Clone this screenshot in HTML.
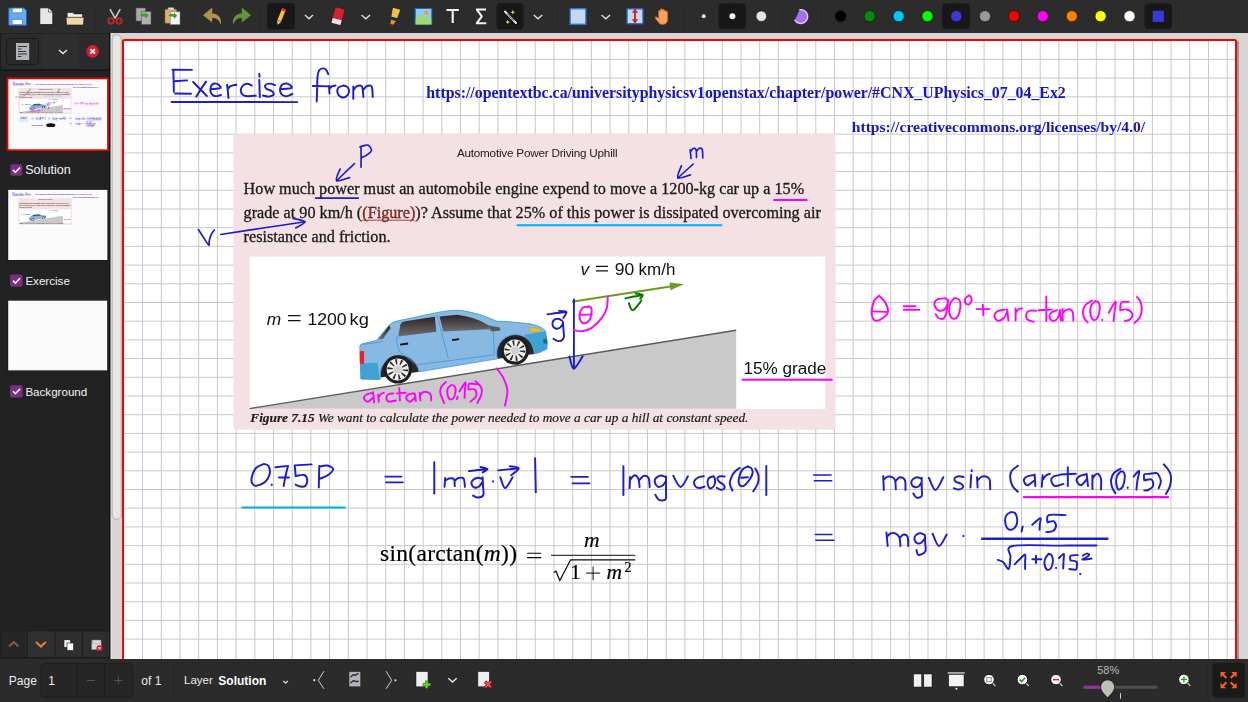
<!DOCTYPE html>
<html><head><meta charset="utf-8">
<style>
html,body{margin:0;padding:0}
body{width:1248px;height:702px;overflow:hidden;position:relative;background:#2b2b2b;font-family:"Liberation Sans",sans-serif}
.t{position:absolute;white-space:nowrap;line-height:1}
</style></head><body>
<div style="position:absolute;left:0;top:0;width:1248px;height:33px;background:#2c2c2c"></div>
<svg width="1248" height="33" viewBox="0 0 1248 33" style="position:absolute;left:0;top:0">
<g stroke="#272727" stroke-width="1"><path d="M95.5 3V30M193.5 3V30M260.5 3V30M557.5 3V30M683.5 3V30M782.5 3V30M821.5 3V30M1178.5 3V30"/></g>
<g fill="#181818"><rect x="267" y="3" width="28" height="26.5" rx="4"/><rect x="496.5" y="3" width="27" height="26.5" rx="4"/><rect x="718.5" y="3.4" width="27.5" height="25.5" rx="4"/><rect x="942" y="3.4" width="28" height="25.5" rx="4"/><rect x="1144.5" y="3.4" width="27.5" height="25.5" rx="4"/></g>
<!-- save -->
<path d="M9.5 8h14.5l2.5 2.5v14a.8 .8 0 0 1-.8 .8h-16.2a.8 .8 0 0 1-.8-.8v-15.7a.8 .8 0 0 1 .8-.8z" fill="#64aaf6" stroke="#1f5fc6" stroke-width="1"/>
<path d="M12.2 8.2h10.2v3.6a1 1 0 0 1-1 1h-8.2a1 1 0 0 1-1-1z" fill="#fff" stroke="#2a66c8" stroke-width=".6"/>
<path d="M12.2 24.6v-4.2a1 1 0 0 1 1-1h8.2a1 1 0 0 1 1 1v4.2z" fill="#fff" stroke="#2a66c8" stroke-width=".6"/>
<!-- new -->
<path d="M39.8 7.8h8.8l4.2 4.2v12.6h-13z" fill="#e6e6e6" stroke="#151515" stroke-width=".8"/>
<path d="M48.6 7.8v4.2h4.2z" fill="#fafafa" stroke="#151515" stroke-width=".6"/>
<!-- open -->
<path d="M67.2 12.6h5.8l1.2 1.3h8.3v3.6h-15.3z" fill="#f2f2f2" stroke="#151515" stroke-width=".6"/>
<path d="M66 17.3h18l-.6 7.7h-16.8z" fill="#f1d7a6" stroke="#151515" stroke-width=".6"/>
<!-- cut -->
<path d="M110 9.2l5.2 9.2M120.2 9.2l-5.2 9.2" stroke="#c8c8c8" stroke-width="1.6" fill="none"/>
<circle cx="111" cy="21" r="2.7" fill="none" stroke="#b8282b" stroke-width="2"/>
<circle cx="119" cy="21" r="2.7" fill="none" stroke="#b8282b" stroke-width="2"/>
<!-- copy -->
<rect x="136" y="8" width="9.5" height="13" fill="#a8a8a8" stroke="#555" stroke-width=".6"/>
<rect x="141.5" y="11.5" width="9.5" height="13" fill="#b0b0b0" stroke="#555" stroke-width=".6"/>
<path d="M140 15.5c1-2 3.5-2.5 5.5-1.5v-1.8l3.2 3.2-3.2 3.2v-1.8c-2-.8-4-.3-5.5-1.3z" fill="#3aa02a"/>
<!-- paste -->
<rect x="165" y="9.2" width="11.5" height="14" rx="1" fill="#e0b070" stroke="#8a6a3a" stroke-width=".6"/>
<rect x="168" y="7.4" width="6" height="2.8" rx=".8" fill="#ddd" stroke="#777" stroke-width=".5"/>
<rect x="170.2" y="11.8" width="9.8" height="12.8" fill="#f4f4f4" stroke="#777" stroke-width=".6"/>
<path d="M168.5 15.8c1-2 3.5-2.5 5.5-1.5v-1.8l3.2 3.2-3.2 3.2v-1.8c-2-.8-4-.3-5.5-1.3z" fill="#3aa02a"/>
<!-- undo -->
<path d="M212.2 7.5L203 15.2l9.2 7.3v-4.4c4 0 7 1.5 8.4 6.8 1.6-6.5-1.5-11-8.4-11.5z" fill="#b0914f"/>
<!-- redo -->
<path d="M241.8 7.5L251 15.2l-9.2 7.3v-4.4c-4 0-7 1.5-8.4 6.8-1.6-6.5 1.5-11 8.4-11.5z" fill="#5c9838"/>
<!-- pencil -->
<g transform="translate(281,16.5) rotate(22)"><rect x="-2.3" y="-7.5" width="4.6" height="12.5" fill="#f6c23a" stroke="#000" stroke-width=".5"/><rect x="-2.3" y="-8.5" width="4.6" height="2.5" fill="#e02838"/><path d="M-2.3 5l2.3 4 2.3-4z" fill="#d8c8b0"/></g>
<!-- chevrons -->
<g fill="none" stroke="#e0e0e0" stroke-width="1.4"><path d="M305 15l4 3.8 4-3.8M361.6 15l4.2 3.8 4.2-3.8M533.8 15l4.2 3.8 4.2-3.8M601.6 15l4.2 3.8 4.2-3.8"/></g>
<!-- eraser -->
<g transform="translate(338,16.2) rotate(15)"><rect x="-4.6" y="-8" width="9.2" height="16" rx=".8" fill="#d82030"/><rect x="-4.6" y="3" width="9.2" height="5" fill="#e8e8e8"/></g>
<!-- highlighter -->
<g transform="translate(394.5,16.5) rotate(15)"><path d="M-3.8 -8h7.6l-.8 9h-6z" fill="#f0c040"/><rect x="-3" y="1" width="6" height="3" fill="#1a2a48"/><path d="M-2.5 4h5l-1.5 4.2h-3z" fill="#f09020"/></g>
<!-- image -->
<rect x="415.2" y="8.5" width="16.6" height="16" fill="#8cccf6" stroke="#1f66d2" stroke-width="1"/>
<path d="M415.7 18l4.5-3.5 5 3.8 3-2 3.1 2v6.2h-15.6z" fill="#a2da6a"/>
<circle cx="426.2" cy="12.7" r="2.3" fill="#f5a020"/>
<!-- T -->
<path d="M446.5 10h12.4M452.7 10v13" stroke="#f4f4f4" stroke-width="2.2" fill="none"/>
<!-- sigma -->
<path d="M486 9.6h-9.2l5 6.8-5 6.8h9.5" stroke="#f4f4f4" stroke-width="2" fill="none" stroke-linejoin="round"/>
<!-- wand -->
<path d="M505 11.5l11 11.5" stroke="#000" stroke-width="3.2" stroke-linecap="round"/>
<path d="M505 11.5l11 11.5" stroke="#f0f0f0" stroke-width="2" stroke-linecap="round"/>
<path d="M507 13.5l7 7.2" stroke="#24344e" stroke-width="1"/>
<path d="M512.8 10l.7 1.5 1.5.7-1.5.7-.7 1.5-.7-1.5-1.5-.7 1.5-.7z" fill="#f4cc40"/>
<path d="M507.7 19.8l.7 1.5 1.5.7-1.5.7-.7 1.5-.7-1.5-1.5-.7 1.5-.7z" fill="#f4cc40"/>
<!-- square -->
<rect x="570.2" y="8.8" width="15.6" height="15.4" fill="#c6d8ee" stroke="#2f7ee8" stroke-width="1.3"/>
<!-- vspace -->
<rect x="627" y="8.8" width="16" height="15" fill="#c6d8ee" stroke="#1f5ed0" stroke-width="1.3"/>
<path d="M635 8.5l-3.2 4.2h2.2v6.6h-2.2l3.2 4.5 3.2-4.5h-2.2v-6.6h2.2z" fill="#d62024"/>
<!-- hand -->
<path d="M658 21.5c-2-2-3.5-3.5-2.6-4.4.8-.8 2 .3 3.2 1.4v-7.3c0-1.2 1.8-1.2 1.8 0v-1.6c0-1.2 1.8-1.2 1.8 0v.4c0-1.2 1.8-1.2 1.8 0v1c0-1.2 1.8-1.2 1.8 0v1c0-1.2 1.8-1.2 1.8 0v7.5c0 3-2 5-5.2 5-2.3 0-3.5-1-4.4-3z" fill="#f8a060" stroke="#d05a10" stroke-width=".7"/>
<!-- dots -->
<circle cx="703.7" cy="16.2" r="1.9" fill="#f4f4f4"/>
<circle cx="732.4" cy="16.2" r="3" fill="#f4f4f4"/>
<circle cx="761.3" cy="16.2" r="5.3" fill="#e4e4e4" stroke="#111" stroke-width=".6"/>
<!-- purple -->
<path d="M799.8 9.6A7 7 0 1 1 794.8 20.2Z" fill="#a474e4"/>
<path d="M799.8 9.6A7 7 0 1 1 794.8 20.2" fill="none" stroke="#e8c8ff" stroke-width="1.3" stroke-linecap="round"/>
<g stroke="#151515" stroke-width=".7">
<circle cx="840.6" cy="16.2" r="5.6" fill="#000"/>
<circle cx="869.7" cy="16.2" r="5.6" fill="#0a8a0a"/>
<circle cx="898.6" cy="16.2" r="5.6" fill="#00c8ff"/>
<circle cx="927.4" cy="16.2" r="5.6" fill="#00ff00"/>
<circle cx="956.3" cy="16.2" r="5.6" fill="#3a3ad8"/>
<circle cx="985" cy="16.2" r="5.6" fill="#999"/>
<circle cx="1014" cy="16.2" r="5.6" fill="#ff0000"/>
<circle cx="1042.7" cy="16.2" r="5.6" fill="#ff00ff"/>
<circle cx="1071.8" cy="16.2" r="5.6" fill="#ff8000"/>
<circle cx="1100.6" cy="16.2" r="5.6" fill="#ffff00"/>
<circle cx="1129.5" cy="16.2" r="5.6" fill="#ffffff"/>
</g>
<rect x="1152.7" y="10.8" width="11.2" height="11.1" fill="#3a3ad8"/>
</svg>

<div style="position:absolute;left:110px;top:33px;width:1138px;height:626px;background:#d8d6d2"></div>
<svg width="1248" height="702" viewBox="0 0 1248 702" style="position:absolute;left:0;top:0;will-change:transform">
<defs><clipPath id="cv"><rect x="110" y="33" width="1138" height="626"/></clipPath></defs>
<g clip-path="url(#cv)">
<rect x="111" y="33.5" width="11" height="626" fill="#d8d6d2"/>
<path d="M110.9 33V659" stroke="#f4f4f2" stroke-width="1"/>
<rect x="112.2" y="34.6" width="9" height="484.8" rx="4.5" fill="#e7e6e3" stroke="#a4a4a2" stroke-width=".8"/>
<path d="M1238 41V660M124 41.2" stroke="#7f8f8f" stroke-width="1.6" fill="none"/>
<rect x="123" y="40" width="1113" height="800" rx="1.5" fill="#fff" stroke="#ff0000" stroke-width="2"/>
<path d="M142.6 41V659M161.3 41V659M180.0 41V659M198.7 41V659M217.4 41V659M236.1 41V659M254.8 41V659M273.5 41V659M292.2 41V659M310.9 41V659M329.6 41V659M348.3 41V659M367.0 41V659M385.7 41V659M404.4 41V659M423.1 41V659M441.8 41V659M460.5 41V659M479.2 41V659M497.9 41V659M516.6 41V659M535.3 41V659M554.0 41V659M572.7 41V659M591.4 41V659M610.1 41V659M628.8 41V659M647.5 41V659M666.2 41V659M684.9 41V659M703.6 41V659M722.3 41V659M741.0 41V659M759.7 41V659M778.4 41V659M797.1 41V659M815.8 41V659M834.5 41V659M853.2 41V659M871.9 41V659M890.6 41V659M909.3 41V659M928.0 41V659M946.7 41V659M965.4 41V659M984.1 41V659M1002.8 41V659M1021.5 41V659M1040.2 41V659M1058.9 41V659M1077.6 41V659M1096.3 41V659M1115.0 41V659M1133.7 41V659M1152.4 41V659M1171.1 41V659M1189.8 41V659M1208.5 41V659M1227.2 41V659M124 59.4H1235M124 78.1H1235M124 96.8H1235M124 115.5H1235M124 134.2H1235M124 152.9H1235M124 171.6H1235M124 190.3H1235M124 209.0H1235M124 227.7H1235M124 246.4H1235M124 265.1H1235M124 283.8H1235M124 302.5H1235M124 321.2H1235M124 339.9H1235M124 358.6H1235M124 377.3H1235M124 396.0H1235M124 414.7H1235M124 433.4H1235M124 452.1H1235M124 470.8H1235M124 489.5H1235M124 508.2H1235M124 526.9H1235M124 545.6H1235M124 564.3H1235M124 583.0H1235M124 601.7H1235M124 620.4H1235M124 639.1H1235" stroke="#c8c8c8" stroke-width="1" fill="none"/>
<g id="Lex"><path d="M173.4 69.9C173.4 71.6 173.5 76.4 173.6 80.0C173.7 83.6 173.8 89.8 173.8 91.7M172.5 69.7L191.9 69.9M174.3 81.2L187.0 80.4M175.1 93.5L191.0 93.7M206.0 81.6C205.2 82.8 202.6 86.5 201.0 89.0C199.4 91.5 197.1 95.3 196.3 96.6M193.2 82.0C194.3 83.2 197.7 86.7 200.0 89.0C202.3 91.3 205.8 94.9 206.9 96.1M210.8 89.1C212.4 88.9 218.7 88.8 220.1 88.2C221.5 87.6 219.9 86.1 219.2 85.3C218.5 84.5 217.2 83.7 216.0 83.6C214.8 83.5 212.9 83.8 212.0 84.7C211.1 85.6 210.5 87.6 210.4 89.0C210.3 90.4 210.5 92.1 211.2 93.3C211.9 94.5 213.3 95.6 214.5 96.0C215.7 96.4 217.4 96.0 218.5 95.8C219.6 95.6 220.6 95.1 221.0 95.0M227.1 84.7C227.2 85.8 227.6 88.8 227.8 91.0C228.0 93.2 228.4 96.8 228.5 97.9M227.6 89.5C228.1 89.0 229.0 87.0 230.5 86.2C232.0 85.4 235.4 85.0 236.4 84.7M251.8 85.6C251.0 85.3 248.6 83.7 247.0 83.8C245.4 83.9 243.5 84.8 242.5 86.0C241.5 87.2 240.7 89.4 240.8 90.9C240.9 92.4 241.8 94.1 243.0 95.0C244.2 95.9 245.9 96.1 248.0 96.2C250.1 96.3 254.5 95.8 255.8 95.7M259.3 73.7L259.5 76.8M259.3 80.0L259.8 97.0M275.0 85.2C274.2 84.9 271.6 83.6 270.0 83.6C268.4 83.6 265.9 84.4 265.3 85.3C264.7 86.2 265.4 87.8 266.5 88.8C267.6 89.8 270.8 90.2 272.0 91.2C273.2 92.2 274.2 93.7 273.6 94.6C273.0 95.5 270.3 96.4 268.5 96.6C266.7 96.8 263.9 95.7 263.0 95.5M280.6 89.1C282.4 88.9 289.6 88.9 291.2 88.2C292.8 87.5 290.9 85.8 290.0 85.0C289.1 84.2 287.3 83.5 286.0 83.4C284.7 83.4 283.0 83.8 282.0 84.7C281.0 85.6 280.3 87.5 280.1 89.0C279.9 90.5 280.2 92.3 281.0 93.5C281.8 94.7 283.7 95.8 285.0 96.1C286.3 96.4 287.8 96.0 289.0 95.6C290.2 95.2 291.9 94.2 292.5 93.9M171.6 101.9L297.3 102.1M328.2 74.1C327.8 73.3 326.9 70.5 326.0 69.6C325.1 68.6 324.0 68.3 322.9 68.4C321.8 68.5 320.1 68.9 319.2 70.2C318.3 71.5 318.0 72.7 317.6 76.0C317.2 79.3 317.2 85.8 317.1 90.0C317.0 94.2 316.8 99.5 316.7 101.4M312.8 86.0L329.9 86.4M329.0 86.0L329.5 93.5M329.2 89.0C329.6 88.5 330.8 86.9 331.8 86.3C332.9 85.7 334.9 85.7 335.5 85.6M343.5 85.6C342.6 85.9 339.4 86.3 338.4 87.5C337.4 88.7 337.2 91.4 337.6 93.0C338.0 94.6 339.6 96.4 341.0 97.0C342.4 97.6 344.7 97.4 346.0 96.6C347.3 95.8 348.8 93.6 349.0 92.0C349.2 90.4 348.4 88.1 347.5 87.0C346.6 85.9 344.2 85.8 343.5 85.6M353.3 98.8L353.3 86.4M353.4 90.0C354.0 89.4 355.6 86.9 357.0 86.2C358.4 85.5 360.6 85.4 361.6 86.0C362.6 86.6 362.5 88.2 362.8 90.0C363.1 91.8 363.3 95.8 363.4 97.0M363.2 90.0C363.8 89.4 365.5 86.9 366.8 86.2C368.1 85.5 370.3 85.4 371.2 86.0C372.1 86.6 372.1 88.2 372.4 90.0C372.6 91.8 372.6 95.8 372.7 97.0" fill="none" stroke="#1c1cd0" style="stroke-width:calc(var(--k,1)*1.95px)" stroke-linecap="round" stroke-linejoin="round"/>
<text x="426.3" y="97.7" font-family="Liberation Serif" font-weight="bold" font-size="15.85" fill="#1414c8">https://opentextbc.ca/universityphysicsv1openstax/chapter/power/#CNX_UPhysics_07_04_Ex2</text>
<text x="851.8" y="132.1" font-family="Liberation Serif" font-weight="bold" font-size="15.6" fill="#1414c8">https://creativecommons.org/licenses/by/4.0/</text>
<rect x="233.5" y="134" width="602" height="295.6" fill="#f3e1e3"/>
<text x="456.9" y="156.6" font-family="Liberation Sans" font-size="11.7" letter-spacing="-0.21" fill="#202020">Automotive Power Driving Uphill</text>
<text x="243.6" y="193.5" font-family="Liberation Serif" font-size="16.2" fill="#1a1a1a" stroke="#1a1a1a" stroke-width="0.3">How much power must an automobile engine expend to move a 1200-kg car up a 15%</text>
<text x="243.6" y="218.4" font-family="Liberation Serif" font-size="16.2" fill="#1a1a1a" stroke="#1a1a1a" stroke-width="0.3">grade at 90 km/h (<tspan fill="#b8241c">(Figure)</tspan>)? Assume that 25% of this power is dissipated overcoming air</text>
<text x="243.6" y="242.4" font-family="Liberation Serif" font-size="16.2" fill="#1a1a1a" stroke="#1a1a1a" stroke-width="0.3">resistance and friction.</text>
<path d="M362.2 220.2H414.6" stroke="#b8241c" stroke-width="0.9"/>
<rect x="249.8" y="256.6" width="575.3" height="152.4" fill="#fff"/>
<text x="250.3" y="421.5" font-family="Liberation Serif" font-style="italic" font-size="13.3" fill="#1a1a1a" stroke="#1a1a1a" stroke-width="0.2"><tspan font-weight="bold">Figure 7.15</tspan> We want to calculate the power needed to move a car up a hill at constant speed.</text>
<path d="M249.6 408.8L736.2 330.4V408.8Z" fill="#c9c9c9"/>
<path d="M249.6 408.6L736.2 330.3" stroke="#5a5a5a" stroke-width="1.4"/>
<text transform="translate(266.8 325.2) scale(1.05 1)" font-family="Liberation Sans" fill="#111" font-size="16.5" font-style="italic">m</text>
<path d="M288 315.6H300.5M288 320.7H300.5" stroke="#111" stroke-width="1.3"/>
<text transform="translate(307.4 325.2) scale(1.07 1)" font-family="Liberation Sans" fill="#111" font-size="16.5">1200</text>
<text transform="translate(349.6 325.2) scale(1.11 1)" font-family="Liberation Sans" fill="#111" font-size="16.5">kg</text>
<text transform="translate(580.4 275.3) scale(1.05 1)" font-family="Liberation Sans" fill="#111" font-size="16.5" font-style="italic">v</text>
<path d="M596 266.3H608M596 270.9H608" stroke="#111" stroke-width="1.3"/>
<text transform="translate(614.8 275.4) scale(1.06 1)" font-family="Liberation Sans" fill="#111" font-size="16.5">90</text>
<text transform="translate(638.6 275.4) scale(1.03 1)" font-family="Liberation Sans" fill="#111" font-size="16.5">km/h</text>
<text transform="translate(743.6 374.3) scale(1.082 1)" font-family="Liberation Sans" fill="#111" font-size="15.8">15% grade</text>
<path d="M572 301.8L672 286.2" stroke="#6c9c1e" stroke-width="1.9"/>
<path d="M669.6 282.5L683.9 284.3L670.4 290.3Z" fill="#6c9c1e"/>
<path d="M380.5 377.6A18.6 18.6 0 1 1 419 371.8Z" fill="#2c2626"/><path d="M497.5 358.8A18.8 18.8 0 1 1 534.3 354Z" fill="#2c2626"/>
<path d="M360.8 379L359.8 346.5Q360 344.2 363 343.6L376.5 340.4L389 325.3Q392 321.6 398 320.8L434.7 313Q450 309.6 462 310.5Q480 313 497 321.3L507 321.5L530 323.8Q541 326 545 330.5L547.4 342.6L546.8 349Q541 352.5 534.3 354A18.8 18.8 0 1 0 497.5 358.8L419 371.8A18.6 18.6 0 1 0 380.5 377.6L379.8 379.6Z" fill="#88b9e3" stroke="#3f95d8" stroke-width=".8"/>
<path d="M360.2 363.5L377.5 362.8L379.8 379.6L361 379.2Z" fill="#3ea2d2"/>
<path d="M524 334.8Q535 333 546 331.5L547.4 342.6L546.8 349Q541 352.5 534.3 354Q532 342 524 334.8Z" fill="#3ea2d2"/>
<rect x="359.8" y="351" width="4.3" height="13" rx="1" fill="#e8202a"/>
<path d="M528.6 328.2Q534 326.5 540.5 329.5L540 332Q533 332.5 528.6 330.5Z" fill="#f5c400" stroke="#999" stroke-width=".5"/>
<path d="M543 339.5L547 338.5L547 344L543.5 343Z" fill="#2060b0"/>
<defs><linearGradient id="win" x1="0" y1="0" x2="0" y2="1"><stop offset="0" stop-color="#2e2326"/><stop offset="1" stop-color="#6e6e70"/></linearGradient></defs>
<path d="M378.2 339.4L389 325.8Q390.6 326 390.2 328.5L383 339Z" fill="url(#win)"/>
<path d="M398.3 336.6L400.4 324.4Q401.5 321.8 405 321.2L434.8 316.8L436.4 331.8Z" fill="url(#win)"/>
<path d="M439.6 316.4L457 314.8Q475 316.8 488.5 325.2L490 329.2L443.2 331.6Z" fill="url(#win)"/>
<path d="M488.4 325.2L499.5 327.6L500.8 330.6L491.2 331.6Z" fill="#58585a"/>
<g fill="none" stroke="#3f95d8" stroke-width=".8"><path d="M437 314.7L448.4 358.5M493.3 331.2L494.4 355.1M397 336.5Q395.5 345 400.5 352.5L416.5 364.8L494 355M362.5 344.5L383 341.5"/></g>
<g fill="#111"><path d="M400 343.8L408 342.6L408.3 344.6L400.3 345.6Z"/><path d="M452 339.2L459 338.2L459.2 340L452.2 341Z"/></g>
<circle cx="397.7" cy="369.4" r="14.2" fill="#1e1e1e"/>
<circle cx="514.9" cy="350.6" r="14.2" fill="#1e1e1e"/>
<circle cx="397.7" cy="369.4" r="11" fill="#f2f2f2"/>
<circle cx="514.9" cy="350.6" r="11" fill="#f2f2f2"/>
<circle cx="397.7" cy="369.4" r="7.6" fill="none" stroke="#2a2a2a" stroke-width="5.5" stroke-dasharray="1.6 3.18"/>
<circle cx="514.9" cy="350.6" r="7.6" fill="none" stroke="#2a2a2a" stroke-width="5.5" stroke-dasharray="1.6 3.18"/>
<circle cx="397.7" cy="369.4" r="4" fill="#d0d0d0"/>
<circle cx="514.9" cy="350.6" r="4" fill="#d0d0d0"/>
</g><g id="Lsol"><path d="M361.0 146.9C361.0 148.6 361.1 153.6 361.1 157.0C361.1 160.4 361.0 165.5 361.0 167.2M359.9 147.0C360.6 146.8 362.6 145.9 364.0 145.6C365.4 145.3 367.1 144.5 368.3 145.3C369.6 146.1 371.7 149.0 371.5 150.6C371.3 152.2 368.6 153.6 367.0 154.8C365.4 156.0 362.8 157.1 361.9 157.6M354.6 163.5C353.1 164.9 348.5 169.1 345.5 172.0C342.5 174.9 338.1 179.3 336.6 180.8M340.1 169.0C339.5 170.9 335.0 179.2 336.6 180.6C338.2 182.0 347.4 178.1 349.6 177.6M315.5 198.1L358.3 198.1M690.1 149.8C690.2 150.5 690.5 152.6 690.6 154.0C690.8 155.4 690.9 157.8 691.0 158.5M690.5 152.0C690.9 151.4 692.1 149.0 693.0 148.6C693.9 148.2 695.4 148.0 696.0 149.5C696.6 151.0 696.4 156.2 696.5 157.5M696.4 151.5C696.8 151.0 698.0 148.8 699.0 148.4C700.0 148.1 701.6 147.8 702.2 149.4C702.8 151.0 702.7 156.6 702.8 158.0M693.3 164.0C692.0 165.2 688.1 168.7 685.5 171.0C682.9 173.3 679.1 176.9 677.8 178.1M681.4 165.8C680.8 167.8 676.4 176.3 677.9 177.8C679.4 179.3 688.4 175.4 690.5 174.9M198.3 229.5C199.2 230.8 201.8 234.9 203.5 237.5C205.2 240.1 207.8 244.6 208.8 245.1C209.7 245.6 208.8 242.2 209.3 240.4C209.8 238.6 210.6 235.7 211.5 234.0C212.4 232.3 214.0 230.7 214.5 230.0M220.7 234.5C227.8 233.4 248.9 230.1 263.0 228.0C277.1 225.9 298.1 222.8 305.1 221.7M293.1 218.5C295.1 219.1 304.6 220.2 305.0 221.8C305.4 223.4 297.2 226.9 295.7 227.9" fill="none" stroke="#1c1cd0" style="stroke-width:calc(var(--k,1)*1.65px)" stroke-linecap="round" stroke-linejoin="round"/>
<path d="M774.2 200.1L806.7 200.1" fill="none" stroke="#ff00ff" style="stroke-width:calc(var(--k,1)*2.0px)" stroke-linecap="round" stroke-linejoin="round"/>
<path d="M517.4 225.3L721.5 225.3" fill="none" stroke="#00b0f0" style="stroke-width:calc(var(--k,1)*2.0px)" stroke-linecap="round" stroke-linejoin="round"/>
<path d="M742.5 379.7L831.8 379.7" fill="none" stroke="#ff00ff" style="stroke-width:calc(var(--k,1)*1.9px)" stroke-linecap="round" stroke-linejoin="round"/>
<path d="M573.9 299.4L573.9 368.9M569.4 356.4C570.1 358.4 571.6 368.7 573.8 368.7C576.0 368.7 581.2 358.4 582.7 356.4M562.0 320.5C561.3 320.2 559.4 318.8 558.0 318.8C556.6 318.8 554.4 319.5 553.5 320.5C552.6 321.5 552.2 323.7 552.5 325.0C552.8 326.3 554.2 328.0 555.5 328.5C556.8 329.0 558.8 328.6 560.0 327.8C561.2 327.1 562.2 324.6 562.6 324.0M562.9 321.9C563.0 323.2 563.3 327.4 563.5 330.0C563.7 332.6 564.3 335.5 563.9 337.3C563.5 339.1 562.1 340.2 561.0 340.8C559.9 341.4 558.6 341.1 557.4 340.8C556.1 340.5 554.1 339.1 553.5 338.8M547.5 314.4C549.1 314.2 553.9 313.4 557.0 313.0C560.1 312.6 564.8 312.1 566.4 311.9M558.9 310.9C560.1 311.1 565.6 310.8 566.4 312.0C567.1 313.2 563.9 316.9 563.4 317.9" fill="none" stroke="#1c1cd0" style="stroke-width:calc(var(--k,1)*1.9px)" stroke-linecap="round" stroke-linejoin="round"/>
<path d="M573.9 329.9C575.2 330.1 578.9 331.6 581.9 331.3C584.9 331.0 588.5 330.1 591.8 327.9C595.1 325.7 599.3 321.2 601.8 317.9C604.3 314.6 605.8 311.5 606.8 307.9C607.8 304.3 607.6 298.4 607.8 296.5M588.5 307.0C587.6 307.1 584.5 306.3 583.0 307.5C581.5 308.7 580.0 311.8 579.6 314.0C579.2 316.2 579.9 319.4 580.8 321.0C581.7 322.6 583.5 323.7 585.0 323.4C586.5 323.1 588.9 320.9 590.0 319.0C591.1 317.1 591.4 313.9 591.6 312.0C591.8 310.1 591.5 308.5 591.0 307.5C590.5 306.5 588.9 306.4 588.5 306.2M580.4 314.9L591.8 314.4M372.3 392.8C371.3 393.1 367.9 393.6 366.5 394.5C365.1 395.4 363.8 397.3 364.0 398.5C364.2 399.7 366.2 401.9 367.8 401.7C369.4 401.5 372.6 398.0 373.6 397.3M373.0 392.1C373.1 392.9 373.5 395.3 373.7 397.0C373.9 398.7 374.1 401.5 374.2 402.4M378.1 394.7C378.2 395.3 378.4 397.3 378.5 398.5C378.6 399.7 378.7 401.2 378.7 401.7M378.7 397.3C379.1 396.8 379.9 394.9 380.8 394.2C381.7 393.4 383.3 393.0 383.8 392.8M393.5 393.4C392.7 393.5 389.7 393.5 388.5 394.2C387.3 394.9 386.4 396.3 386.4 397.5C386.4 398.7 386.9 401.0 388.5 401.5C390.1 402.0 394.8 400.7 396.0 400.5M399.2 388.3C399.3 389.2 399.5 392.0 399.6 394.0C399.7 396.0 399.8 399.4 399.9 400.5M396.7 393.4L405.6 392.8M413.3 393.4C412.4 393.6 409.2 393.9 408.0 394.8C406.8 395.7 405.9 397.4 406.3 398.5C406.7 399.6 408.6 401.9 410.1 401.7C411.6 401.5 414.4 398.0 415.3 397.3M414.6 393.4C414.7 394.0 415.1 395.7 415.3 397.0C415.5 398.3 415.8 400.4 415.9 401.1M420.4 400.5L419.7 392.8M419.9 396.0C420.4 395.4 421.6 392.8 423.0 392.2C424.4 391.6 426.7 391.9 428.0 392.3C429.3 392.7 430.1 393.3 430.6 394.7C431.2 396.1 431.2 399.5 431.3 400.5M446.0 381.9C445.2 382.7 442.4 384.7 441.5 386.5C440.6 388.3 439.9 389.8 440.3 392.5C440.7 395.2 443.5 401.2 444.1 403.0M451.5 385.0C450.9 385.5 448.7 386.7 448.0 388.0C447.3 389.3 447.1 391.2 447.3 393.0C447.6 394.8 448.5 398.2 449.5 399.0C450.5 399.8 452.5 399.3 453.5 398.0C454.5 396.7 455.4 393.0 455.6 391.0C455.8 389.0 455.2 387.0 454.5 386.0C453.8 385.0 452.0 385.2 451.5 385.0M457.6 396.6L456.9 399.2M459.5 391.5C460.5 390.0 464.4 382.8 465.3 382.5C466.2 382.2 465.0 387.4 464.9 390.0C464.8 392.6 464.7 396.6 464.6 397.9M476.8 384.4C475.5 384.3 470.5 382.9 469.1 383.8C467.7 384.7 468.6 388.6 468.5 389.6M468.5 389.6C469.6 389.6 473.6 388.5 474.9 389.6C476.2 390.7 476.9 394.0 476.2 396.0C475.4 398.0 471.4 400.8 470.4 401.7M475.5 381.2C476.4 382.2 480.0 384.9 481.0 387.0C482.0 389.1 482.1 391.3 481.5 394.0C480.9 396.7 478.1 401.5 477.4 403.0M496.7 368.4C497.9 370.1 501.9 374.8 503.7 378.7C505.5 382.6 507.2 387.0 507.4 391.5C507.6 396.0 505.4 403.2 505.0 405.6" fill="none" stroke="#ff00ff" style="stroke-width:calc(var(--k,1)*1.9px)" stroke-linecap="round" stroke-linejoin="round"/>
<path d="M625.4 298.4C626.8 298.1 631.1 297.1 634.0 296.5C636.9 295.9 641.2 295.2 642.7 294.9M635.6 293.6C636.8 293.8 642.0 294.0 642.7 294.9C643.5 295.8 640.5 298.1 640.1 298.7M628.9 303.2C629.5 304.4 630.7 310.7 632.8 310.3C634.9 309.9 640.0 302.2 641.4 300.6" fill="none" stroke="#007a00" style="stroke-width:calc(var(--k,1)*2.0px)" stroke-linecap="round" stroke-linejoin="round"/>
<path d="M879.0 295.7C878.2 296.6 875.2 298.5 874.0 301.0C872.8 303.5 872.0 308.1 871.7 310.8C871.5 313.6 871.8 315.8 872.5 317.5C873.2 319.2 874.5 320.8 876.2 320.9C878.0 321.0 881.0 319.5 883.0 318.0C885.0 316.5 887.7 314.6 888.0 311.9C888.3 309.2 886.5 304.7 885.0 302.0C883.5 299.3 880.0 296.8 879.0 295.7M872.9 311.4L886.3 311.9M903.7 306.3L915.5 306.1M903.7 309.7L919.4 309.9M945.2 298.2C943.8 298.4 938.8 298.4 937.0 299.5C935.2 300.6 934.2 303.2 934.5 305.0C934.8 306.8 936.8 309.8 938.5 310.5C940.2 311.2 943.4 310.6 945.0 309.0C946.6 307.4 948.0 302.8 948.0 301.0C948.0 299.2 945.7 298.7 945.2 298.2M948.0 300.0C947.8 302.0 947.2 308.9 946.5 312.0C945.8 315.1 944.8 317.5 943.5 318.5C942.2 319.5 939.8 318.7 938.5 318.0C937.2 317.3 936.2 314.8 935.7 314.2M954.5 298.0C953.8 299.0 950.8 301.4 950.0 304.0C949.2 306.6 949.0 311.1 949.5 313.5C950.0 315.9 951.8 318.3 953.2 318.7C954.6 319.1 956.8 318.1 958.0 316.0C959.2 313.9 960.2 308.8 960.4 306.0C960.6 303.2 960.0 300.8 959.0 299.5C958.0 298.2 955.2 298.2 954.5 298.0M968.5 295.6C968.0 296.1 965.8 297.2 965.3 298.5C964.8 299.8 964.9 302.6 965.6 303.5C966.3 304.4 968.5 304.8 969.5 304.2C970.5 303.6 971.4 301.3 971.6 300.0C971.8 298.7 971.0 297.0 970.5 296.3C970.0 295.6 968.8 295.7 968.5 295.6M976.6 309.1L989.5 309.1M982.8 304.6L983.4 315.3M1005.0 309.5C1003.7 309.8 998.8 310.3 997.0 311.5C995.2 312.7 994.3 315.0 994.5 316.5C994.7 318.0 996.4 320.4 998.0 320.7C999.6 320.9 1002.4 319.6 1004.0 318.0C1005.6 316.4 1006.9 312.2 1007.5 311.0M1007.0 309.5C1007.1 310.4 1007.6 313.2 1007.8 315.0C1008.0 316.8 1008.3 319.6 1008.4 320.5M1015.6 308.4C1015.6 309.3 1015.6 312.0 1015.6 314.0C1015.6 316.0 1015.6 319.4 1015.6 320.5M1015.8 312.5C1016.2 312.0 1017.4 310.1 1018.5 309.4C1019.6 308.7 1021.6 308.6 1022.2 308.4M1036.0 310.8C1035.0 310.8 1031.6 310.1 1030.0 310.6C1028.4 311.1 1026.8 312.3 1026.4 313.8C1026.0 315.3 1026.3 318.2 1027.5 319.5C1028.7 320.8 1032.7 321.3 1033.7 321.7M1046.3 296.4C1046.3 298.3 1046.3 303.9 1046.3 308.0C1046.3 312.1 1046.3 318.8 1046.3 321.0M1038.5 310.2L1051.7 309.6M1057.0 310.2C1056.1 310.6 1052.8 311.4 1051.5 312.5C1050.2 313.6 1049.3 315.6 1049.5 317.0C1049.7 318.4 1051.2 320.6 1052.5 320.8C1053.8 321.1 1056.2 320.1 1057.5 318.5C1058.8 316.9 1059.6 312.2 1060.0 311.0M1060.0 310.0C1060.1 310.8 1060.3 313.2 1060.5 315.0C1060.7 316.8 1060.9 319.6 1061.0 320.5M1062.8 320.5L1062.5 309.0M1062.6 313.5C1063.2 312.9 1064.6 310.6 1066.0 310.0C1067.4 309.4 1069.8 309.2 1071.0 309.8C1072.2 310.4 1072.6 311.7 1073.0 313.5C1073.4 315.3 1073.2 319.3 1073.3 320.5M1092.0 300.6C1090.9 301.3 1087.0 303.2 1085.5 305.0C1084.0 306.8 1083.2 309.2 1083.0 311.4C1082.8 313.6 1083.4 316.2 1084.2 318.0C1085.0 319.8 1087.1 321.6 1087.7 322.3M1095.5 301.0C1094.8 301.8 1091.8 303.8 1091.0 306.0C1090.2 308.2 1090.1 311.7 1090.5 314.0C1090.9 316.3 1092.2 319.4 1093.5 319.9C1094.8 320.4 1097.0 319.0 1098.0 317.0C1099.0 315.0 1099.7 310.4 1099.8 308.0C1099.9 305.6 1099.2 303.7 1098.5 302.5C1097.8 301.3 1096.0 301.2 1095.5 301.0M1102.2 319.6L1102.2 320.2M1108.8 312.6C1109.9 310.8 1114.5 301.9 1115.4 301.8C1116.4 301.7 1114.8 308.8 1114.5 312.0C1114.2 315.2 1113.8 319.5 1113.6 321.0M1128.6 301.8C1127.4 301.9 1122.8 301.0 1121.4 302.4C1120.0 303.8 1120.4 308.9 1120.2 310.2M1120.2 310.2C1121.3 310.1 1125.0 308.9 1127.0 309.5C1129.0 310.1 1131.7 312.1 1132.2 313.8C1132.7 315.5 1131.2 318.3 1130.0 319.5C1128.8 320.7 1125.8 320.8 1125.0 321.0M1137.0 297.0C1137.6 297.8 1139.7 300.0 1140.5 302.0C1141.3 304.0 1141.9 306.5 1141.8 309.0C1141.7 311.5 1141.2 314.7 1140.0 317.0C1138.8 319.3 1135.5 321.9 1134.6 322.9" fill="none" stroke="#ff00ff" style="stroke-width:calc(var(--k,1)*1.9px)" stroke-linecap="round" stroke-linejoin="round"/>
<path d="M264.0 463.9C262.7 464.6 258.1 465.5 256.0 468.0C253.9 470.5 252.0 476.1 251.5 478.8C251.0 481.6 252.1 483.4 253.0 484.5C253.9 485.6 255.2 486.0 257.2 485.6C259.2 485.2 262.9 483.9 265.0 482.0C267.1 480.1 269.1 476.7 269.7 474.0C270.3 471.3 269.4 467.7 268.5 466.0C267.6 464.3 264.8 464.2 264.0 463.9M271.7 484.6L271.8 485.0M275.5 467.3L288.0 465.9M288.0 465.9C287.6 467.6 286.2 472.6 285.5 476.0C284.8 479.4 284.0 484.3 283.7 486.0M278.9 477.4L289.0 477.4M311.6 464.4L294.7 465.4M294.7 465.4L295.7 476.0M295.7 476.0C297.1 475.8 302.4 474.4 304.3 475.0C306.2 475.6 307.0 478.0 307.2 479.8C307.4 481.6 306.5 484.9 305.3 486.0C304.1 487.1 301.6 486.7 300.0 486.5C298.4 486.3 296.4 484.9 295.7 484.6M319.3 465.9C319.2 467.8 319.1 473.4 319.0 477.0C318.9 480.6 318.8 485.8 318.8 487.5M319.5 466.5C320.8 466.3 324.7 465.1 327.0 465.5C329.3 465.9 333.0 467.6 333.2 469.2C333.4 470.8 330.2 473.4 328.0 475.0C325.8 476.6 321.1 478.2 319.7 478.8M434.3 462.3L434.3 493.6M444.5 486.8L445.2 477.9M445.0 481.0C445.7 480.6 447.5 478.8 449.0 478.5C450.5 478.2 453.1 478.0 454.0 479.3C454.9 480.6 454.6 485.0 454.7 486.1M454.5 481.0C455.2 480.5 457.0 478.4 458.5 478.0C460.0 477.6 462.5 477.1 463.6 478.6C464.7 480.1 464.7 485.4 464.9 486.8M482.0 479.0C481.3 478.8 479.5 477.6 478.0 477.8C476.5 478.0 474.1 479.0 473.0 480.0C471.9 481.0 471.2 482.8 471.5 484.0C471.8 485.2 473.2 487.1 474.5 487.5C475.8 487.9 477.7 487.4 479.0 486.5C480.3 485.6 481.9 482.8 482.5 482.0M482.6 477.2C482.7 478.7 482.9 483.0 483.0 486.0C483.1 489.0 484.1 493.1 483.3 495.0C482.5 496.9 479.7 497.4 478.0 497.5C476.3 497.6 473.9 495.9 473.1 495.6M469.0 471.1C470.5 470.9 474.9 470.3 478.0 470.0C481.1 469.7 485.8 469.2 487.4 469.1M480.6 467.0C481.7 467.4 487.1 468.2 487.4 469.1C487.7 470.0 483.4 471.9 482.6 472.5M492.9 481.3L493.0 481.6M500.3 477.2C501.1 479.0 503.1 488.1 505.1 488.1C507.2 488.1 511.4 479.0 512.6 477.2M498.3 470.4C499.9 470.2 504.6 469.7 508.0 469.4C511.4 469.1 516.9 468.6 518.7 468.4M509.9 466.3C511.4 466.6 518.5 466.9 518.7 468.4C518.9 469.9 512.5 474.1 511.2 475.2M535.1 458.2L535.8 492.2M623.4 466.3L623.4 494.9M629.6 488.1L630.1 476.9M630.0 480.0C630.8 479.2 633.2 475.3 634.6 475.2C636.0 475.1 637.7 477.2 638.5 479.2C639.3 481.2 639.4 485.7 639.6 487.0M639.3 480.0C640.1 479.3 642.5 476.1 644.1 475.8C645.7 475.5 647.7 476.1 648.6 478.0C649.5 479.9 649.5 485.5 649.7 487.0M665.5 477.0C664.8 476.8 662.6 475.3 661.0 475.5C659.4 475.7 657.0 476.9 656.0 478.0C655.0 479.1 654.5 480.6 654.8 482.0C655.0 483.4 656.3 485.8 657.5 486.5C658.7 487.2 660.6 486.8 662.0 486.0C663.4 485.2 665.2 482.2 665.8 481.5M666.0 476.4C666.0 478.7 666.1 486.2 666.0 490.0C665.9 493.8 666.7 497.8 665.5 499.4C664.3 501.0 660.7 500.6 659.0 499.8C657.3 499.1 656.0 495.7 655.4 494.9M673.3 475.8C674.5 477.7 678.2 486.9 680.6 487.0C683.0 487.1 686.7 478.2 687.9 476.4M703.8 476.2C702.8 476.4 699.6 476.6 698.0 477.5C696.4 478.4 694.6 480.0 694.2 481.5C693.8 483.0 694.6 485.4 695.5 486.5C696.4 487.6 698.0 488.0 699.5 488.0C701.0 488.0 703.7 486.8 704.5 486.6M713.6 476.2C712.8 476.5 710.0 477.0 709.0 478.0C708.0 479.0 707.5 480.4 707.5 482.0C707.5 483.6 708.3 486.5 709.0 487.5C709.7 488.5 710.6 488.7 711.5 488.2C712.4 487.7 714.0 486.0 714.6 484.5C715.2 483.0 715.1 480.4 714.9 479.0C714.7 477.6 713.8 476.7 713.6 476.2M724.6 476.5C723.8 476.5 721.2 476.0 720.0 476.3C718.8 476.6 717.4 477.6 717.3 478.5C717.2 479.4 718.4 480.9 719.5 482.0C720.6 483.1 723.0 483.9 723.8 485.0C724.6 486.1 724.8 487.7 724.3 488.5C723.8 489.3 721.7 489.9 720.5 489.8C719.3 489.7 717.5 488.1 716.9 487.8M739.8 468.0C739.0 468.6 736.4 470.0 735.0 471.5C733.6 473.0 732.4 475.0 731.5 477.0C730.6 479.0 729.6 481.2 729.8 483.5C729.9 485.8 732.0 489.4 732.4 490.6M747.9 466.4C748.5 466.8 750.7 467.4 751.5 468.5C752.3 469.6 752.9 471.1 752.6 472.8C752.4 474.6 751.3 477.0 750.0 479.0C748.7 481.0 746.5 483.7 745.0 484.9C743.5 486.1 742.2 486.6 741.2 486.2C740.2 485.8 739.0 484.2 738.7 482.5C738.4 480.8 738.9 478.2 739.5 476.0C740.1 473.8 741.1 471.1 742.5 469.5C743.9 467.9 747.0 466.9 747.9 466.4M741.2 477.8L747.9 477.2M755.3 468.4C755.8 469.5 757.8 472.4 758.3 474.8C758.8 477.2 758.8 480.1 758.0 482.9C757.2 485.6 754.1 489.9 753.3 491.3M766.3 466.0L766.3 494.9M883.8 489.9L883.2 476.0M883.5 480.0C884.2 479.4 885.9 477.0 887.5 476.6C889.1 476.2 891.7 476.8 893.0 477.5C894.3 478.2 894.7 479.0 895.2 481.0C895.7 483.0 895.7 487.9 895.8 489.3M895.6 481.0C896.3 480.4 898.5 477.3 900.0 477.2C901.5 477.1 904.0 478.1 904.9 480.2C905.8 482.3 905.4 488.3 905.5 489.9M921.0 478.5C920.3 478.3 918.4 477.0 917.0 477.2C915.6 477.4 913.4 478.4 912.5 479.5C911.6 480.6 911.2 482.8 911.5 484.0C911.8 485.2 913.3 486.6 914.5 487.0C915.7 487.4 917.3 487.2 918.5 486.5C919.7 485.8 921.0 483.2 921.5 482.5M921.7 477.8C921.7 479.5 921.7 485.0 921.7 488.0C921.7 491.0 922.6 494.3 921.7 495.9C920.8 497.5 917.9 498.0 916.5 497.6C915.1 497.2 913.8 494.2 913.3 493.5M928.9 477.8C930.0 479.8 933.1 490.0 935.5 489.9C937.9 489.8 942.0 479.3 943.3 477.2M963.5 477.0C962.8 476.9 960.5 476.1 959.0 476.3C957.5 476.5 955.4 477.1 954.8 478.0C954.2 478.9 954.5 480.5 955.5 481.5C956.5 482.5 959.7 482.9 961.0 483.8C962.3 484.7 963.5 486.1 963.2 487.0C962.9 487.9 960.6 489.3 959.0 489.5C957.4 489.7 954.7 488.4 953.8 488.2M971.7 470.2L971.6 471.2M971.2 475.0C971.1 476.0 970.9 478.9 970.8 481.0C970.7 483.1 970.5 486.4 970.4 487.5M977.6 487.5L977.0 477.2M977.3 481.0C977.9 480.3 979.5 477.8 981.0 477.0C982.5 476.2 984.6 476.1 986.0 476.5C987.4 476.9 988.9 477.4 989.6 479.5C990.3 481.6 990.1 487.7 990.2 489.3M1018.0 465.8C1017.0 466.6 1013.3 468.7 1012.0 470.5C1010.7 472.3 1010.0 474.0 1010.1 476.6C1010.2 479.2 1011.2 483.5 1012.5 486.0C1013.8 488.5 1017.1 490.8 1018.0 491.8M1033.2 475.2C1032.2 475.4 1028.6 475.6 1027.0 476.5C1025.4 477.4 1023.7 478.8 1023.8 480.3C1023.9 481.8 1025.6 485.3 1027.4 485.3C1029.2 485.3 1033.4 481.1 1034.6 480.3M1034.6 474.5C1034.7 475.4 1034.9 478.1 1035.0 480.0C1035.1 481.9 1035.3 485.0 1035.4 486.0M1042.6 475.2L1041.8 486.7M1043.0 479.5C1043.5 478.8 1044.9 476.4 1046.0 475.5C1047.1 474.6 1049.2 474.1 1049.8 473.8M1059.2 475.2C1058.2 475.4 1054.8 475.6 1053.5 476.5C1052.2 477.4 1051.0 478.7 1051.2 480.3C1051.4 481.9 1052.8 485.4 1054.8 486.0C1056.8 486.6 1062.0 484.2 1063.5 483.9M1067.8 467.3C1067.8 468.8 1067.8 472.9 1067.8 476.0C1067.8 479.1 1067.8 484.3 1067.8 486.0M1060.6 474.5L1075.8 473.8M1085.1 474.5C1084.1 474.8 1080.4 475.5 1079.0 476.5C1077.6 477.5 1076.2 478.8 1076.5 480.3C1076.8 481.8 1079.1 485.4 1080.8 485.3C1082.5 485.2 1085.6 480.5 1086.6 479.5M1086.6 473.8C1086.7 474.8 1087.1 478.0 1087.3 480.0C1087.5 482.0 1087.9 485.0 1088.0 486.0M1092.4 488.9L1092.4 475.2M1092.4 479.0C1092.8 478.3 1094.0 475.9 1095.0 475.0C1096.0 474.1 1097.1 473.2 1098.1 473.8C1099.1 474.4 1100.5 476.2 1101.0 478.8C1101.5 481.4 1101.0 487.8 1101.0 489.6M1120.5 468.7C1119.4 469.4 1115.6 471.2 1114.0 473.0C1112.4 474.8 1111.4 477.2 1111.1 479.5C1110.8 481.8 1111.3 484.7 1112.0 487.0C1112.7 489.3 1114.8 492.2 1115.4 493.2M1120.5 471.6C1119.9 472.3 1117.7 474.1 1117.0 476.0C1116.3 477.9 1116.0 480.7 1116.2 483.0C1116.5 485.3 1117.4 489.1 1118.5 489.6C1119.6 490.1 1122.0 488.1 1123.0 486.0C1124.0 483.9 1124.7 479.3 1124.8 477.0C1124.9 474.7 1124.2 472.9 1123.5 472.0C1122.8 471.1 1121.0 471.7 1120.5 471.6M1127.7 487.5L1127.8 487.9M1133.5 476.6C1134.5 475.7 1138.5 470.3 1139.2 470.9C1139.9 471.5 1138.0 476.9 1137.5 480.0C1137.0 483.1 1136.6 488.0 1136.4 489.6M1156.6 473.0C1155.5 473.1 1152.0 473.6 1150.0 473.8C1148.0 474.1 1145.2 473.4 1144.3 474.5C1143.3 475.6 1144.3 479.3 1144.3 480.3M1144.3 480.3C1145.5 480.2 1150.0 478.6 1151.5 479.5C1153.0 480.4 1153.6 484.2 1153.0 486.0C1152.4 487.8 1149.5 489.3 1148.0 490.0C1146.5 490.7 1144.9 490.3 1144.3 490.4M1158.0 473.8C1158.5 475.0 1160.8 478.6 1160.9 481.0C1161.0 483.4 1159.1 487.0 1158.7 488.2M1163.8 464.4C1164.6 465.3 1167.3 468.0 1168.5 470.0C1169.7 472.0 1170.8 473.9 1171.0 476.6C1171.2 479.3 1170.8 483.1 1170.0 486.0C1169.2 488.9 1166.7 492.7 1166.0 494.0M887.7 546.0L886.4 532.6M886.8 537.0C887.4 536.4 889.2 534.1 890.5 533.5C891.8 532.9 893.2 532.6 894.7 533.2C896.2 533.8 898.2 534.9 899.2 537.0C900.2 539.1 900.3 544.5 900.5 546.0M900.0 537.5C900.6 537.0 902.4 534.6 903.7 534.5C905.0 534.4 906.9 535.1 907.6 537.0C908.4 538.9 908.1 544.5 908.2 546.0M924.5 534.8C923.8 534.5 921.5 533.2 920.0 533.3C918.5 533.4 916.4 534.4 915.5 535.5C914.6 536.6 914.3 538.7 914.6 540.0C914.9 541.3 916.4 542.9 917.5 543.3C918.6 543.7 920.3 543.3 921.5 542.5C922.7 541.7 924.2 539.2 924.8 538.5M924.9 535.1C925.0 536.4 925.1 540.3 925.2 543.0C925.3 545.7 926.2 549.3 925.5 551.2C924.8 553.1 922.3 554.0 921.0 554.5C919.7 555.0 918.5 555.2 917.8 554.4C917.0 553.6 916.7 550.6 916.5 549.9M932.6 533.8C933.7 535.8 936.6 545.9 939.0 546.0C941.4 546.1 945.4 536.4 946.7 534.5M963.3 535.8L963.4 536.1M1011.0 512.1C1010.2 512.6 1007.5 513.5 1006.5 515.0C1005.5 516.5 1005.0 518.8 1005.1 521.0C1005.2 523.2 1005.9 526.5 1007.0 528.0C1008.1 529.5 1010.0 530.0 1011.5 529.7C1013.0 529.4 1015.0 527.8 1016.0 526.0C1017.0 524.2 1017.4 521.2 1017.2 519.0C1017.0 516.8 1016.0 514.1 1015.0 513.0C1014.0 511.9 1011.7 512.2 1011.0 512.1M1022.7 526.6L1021.5 531.5M1032.3 524.8C1033.6 523.7 1038.9 518.3 1040.2 518.2C1041.5 518.1 1040.0 522.1 1039.9 524.0C1039.8 525.9 1039.6 528.8 1039.6 529.7M1065.6 515.1C1062.8 515.1 1051.7 513.9 1048.7 515.1C1045.7 516.3 1047.7 521.2 1047.5 522.4M1047.5 522.4C1048.5 522.2 1052.1 520.6 1053.5 521.2C1054.9 521.8 1056.1 524.4 1056.0 526.0C1055.9 527.6 1054.6 530.0 1053.0 531.0C1051.4 532.0 1047.4 531.9 1046.3 532.1M997.8 559.9C998.7 560.2 1001.2 560.5 1003.0 562.0C1004.8 563.5 1007.5 569.8 1008.7 569.0C1010.0 568.2 1009.9 560.8 1010.5 557.0C1011.1 553.2 1004.1 547.9 1012.4 546.0C1020.6 544.1 1046.0 545.7 1060.0 545.6C1074.0 545.5 1090.4 545.4 1096.5 545.4M1014.8 564.2C1015.7 563.3 1018.3 560.6 1020.0 559.0C1021.7 557.4 1024.2 554.0 1025.1 554.5C1025.9 555.0 1025.1 559.6 1025.1 562.0C1025.1 564.4 1025.1 567.8 1025.1 569.0M1032.3 559.3L1041.4 559.3M1036.0 555.7L1036.0 563.0M1048.7 553.9C1048.2 554.6 1046.2 556.3 1045.5 558.0C1044.8 559.7 1044.2 562.1 1044.5 564.0C1044.8 565.9 1045.9 568.9 1047.0 569.6C1048.1 570.3 1050.0 569.4 1051.0 568.0C1052.0 566.6 1052.8 563.2 1052.9 561.0C1053.0 558.8 1052.2 556.2 1051.5 555.0C1050.8 553.8 1049.2 554.1 1048.7 553.9M1056.0 567.8L1056.1 568.1M1059.0 558.1C1059.8 557.4 1063.0 553.4 1063.8 553.9C1064.5 554.4 1063.6 558.6 1063.5 561.0C1063.4 563.4 1063.2 567.2 1063.2 568.4M1077.7 555.1C1076.5 555.2 1071.7 554.8 1070.5 555.7C1069.3 556.6 1070.5 559.7 1070.5 560.5M1070.5 560.5C1071.5 560.7 1075.5 560.7 1076.5 561.7C1077.5 562.7 1076.9 565.2 1076.8 566.5C1076.7 567.8 1077.2 569.2 1075.9 569.6C1074.7 570.0 1070.4 569.1 1069.3 569.0M1083.0 555.6C1083.6 555.3 1085.5 553.7 1086.5 553.6C1087.5 553.5 1089.3 554.1 1089.2 554.8C1089.1 555.5 1087.1 556.8 1086.0 557.6C1084.9 558.4 1081.6 559.4 1082.5 559.6C1083.4 559.8 1090.0 558.8 1091.5 558.6M1080.2 573.8L1080.3 574.1" fill="none" stroke="#1c1cd0" style="stroke-width:calc(var(--k,1)*1.95px)" stroke-linecap="round" stroke-linejoin="round"/>
<path d="M385.2 476.6L401.6 476.6M385.9 482.4L402.9 482.4M571.2 476.9L588.0 476.9M572.3 483.4L589.7 483.4M813.7 475.0L831.0 475.0M814.4 480.8L831.7 480.8M815.3 534.5L831.9 534.5M815.9 540.3L833.8 540.3" fill="none" stroke="#1c1cd0" style="stroke-width:calc(var(--k,1)*1.6px)" stroke-linecap="round" stroke-linejoin="round"/>
<path d="M982.1 538.7L1107.4 538.7" fill="none" stroke="#1c1cd0" style="stroke-width:calc(var(--k,1)*2.4px)" stroke-linecap="round" stroke-linejoin="round"/>
<path d="M242.3 507.5L344.7 507.5" fill="none" stroke="#00b0f0" style="stroke-width:calc(var(--k,1)*2.2px)" stroke-linecap="round" stroke-linejoin="round"/>
<path d="M1023.8 497.1L1168.1 497.1" fill="none" stroke="#ff00ff" style="stroke-width:calc(var(--k,1)*2.2px)" stroke-linecap="round" stroke-linejoin="round"/>
<text x="380" y="560.8" font-family="Liberation Serif" fill="#000" stroke="#000" stroke-width="0.2" font-size="23.5" letter-spacing="0.3">sin(arctan(<tspan font-style="italic">m</tspan>))</text>
<path d="M527.2 553.2H541.2M527.2 557.6H541.2" stroke="#0a0a0a" stroke-width="1.1"/>
<path d="M551 555.3H635.2" stroke="#0a0a0a" stroke-width="1"/>
<text x="584" y="546.5" font-family="Liberation Serif" fill="#000" stroke="#000" stroke-width="0.2" font-size="21.5" font-style="italic">m</text>
<path d="M553.6 572.5L556 571.2L559.8 580.5L570.6 559.8H635.2" fill="none" stroke="#0a0a0a" stroke-width="1.2"/>
<text x="570.2" y="579.1" font-family="Liberation Serif" fill="#000" stroke="#000" stroke-width="0.2" font-size="21">1</text>
<path d="M586.1 573.1H600.1M593.1 566.6V580" stroke="#0a0a0a" stroke-width="1"/>
<text x="606.5" y="579.1" font-family="Liberation Serif" fill="#000" stroke="#000" stroke-width="0.2" font-size="21.5" font-style="italic">m</text>
<text x="624.6" y="571.6" font-family="Liberation Serif" fill="#000" stroke="#000" stroke-width="0.2" font-size="14">2</text>
</g>
</g>
</svg>
<svg width="112" height="626" viewBox="0 33 112 626" style="position:absolute;left:0;top:33px">
<rect x="0" y="33" width="110" height="626" fill="#222"/>
<rect x="0.5" y="33" width="109" height="36.5" rx="3" fill="#2b2b2b" stroke="#1b1b1b" stroke-width="1"/>
<rect x="42" y="34" width="36.5" height="35" fill="#2e2e2e"/>
<rect x="6.5" y="38.5" width="32" height="26" rx="3.5" fill="#2a2a2a" stroke="#1c1c1c" stroke-width="1"/>
<rect x="16" y="43" width="13.2" height="17" fill="#b4b4b4"/>
<g stroke="#23344a" stroke-width="1.2"><path d="M18 46.5h9M18 49h3.5M18 51.5h8M18 54h9M18 56.5h3.5"/></g>
<path d="M59 50l4 3.6 4-3.6" fill="none" stroke="#e8e8e8" stroke-width="1.4"/>
<circle cx="92.7" cy="51.4" r="6.3" fill="#d81e36"/>
<path d="M90.4 49.1l4.6 4.6M95 49.1l-4.6 4.6" stroke="#fff" stroke-width="1.7"/>
<path d="M0 70.5h110" stroke="#171717" stroke-width="1"/>
<rect x="109" y="33" width="1.5" height="626" fill="#141414"/>
<!-- thumb 1 -->
<rect x="7.5" y="78.4" width="100.5" height="71.8" fill="#fafafa" stroke="#e80000" stroke-width="1.8"/>
<g transform="translate(8.8 79.7) scale(0.0883 0.0885) translate(-124 -41)" style="--k:1.5"><use href="#Lex"/><use href="#Lsol"/></g>
<ellipse cx="50.8" cy="125.2" rx="4.6" ry="1.9" fill="#111"/>
<!-- thumb 2 -->
<rect x="7.6" y="190.4" width="100" height="70.1" fill="#111"/>
<rect x="8.2" y="189.9" width="99.2" height="70.1" fill="#fafafa"/>
<g transform="translate(8.4 190.1) scale(0.0891 0.0893) translate(-124 -41)" style="--k:1.5"><use href="#Lex"/></g>
<!-- thumb 3 -->
<rect x="7.6" y="301.2" width="99.8" height="69.9" fill="#111"/>
<rect x="8.2" y="300.7" width="99" height="69.7" fill="#fafafa"/>
<!-- checkboxes -->
<g fill="#7a2f84"><rect x="10.4" y="164.2" width="12" height="11.6" rx="2"/><rect x="10" y="274.6" width="12.6" height="12.2" rx="2"/><rect x="10" y="385.3" width="12.6" height="12.3" rx="2"/></g>
<g fill="none" stroke="#fff" stroke-width="1.6"><path d="M13 170l2.4 2.4 4.6-4.8M13 280.6l2.4 2.4 4.6-4.8M13 391.3l2.4 2.4 4.6-4.8"/></g>
<!-- bottom buttons -->
<rect x="1" y="631" width="108.5" height="26.5" rx="3" fill="#2a2a2a" stroke="#1b1b1b" stroke-width="1"/>
<rect x="1.5" y="631.5" width="26" height="25.5" fill="#262626"/>
<rect x="28" y="631.5" width="27" height="25.5" fill="#303030"/>
<rect x="55.5" y="631.5" width="26.7" height="25.5" fill="#2e2e2e"/>
<rect x="82.7" y="631.5" width="26.3" height="25.5" fill="#2e2e2e"/>
<g stroke="#1e1e1e" stroke-width="1"><path d="M27.5 631.5v26M55 631.5v26M82.4 631.5v26"/></g>
<path d="M9 646.5l4.7-4.5 4.7 4.5" fill="none" stroke="#9a5a3a" stroke-width="1.8"/>
<path d="M36 642l4.9 4.6 4.9-4.6" fill="none" stroke="#f07a30" stroke-width="2"/>
<rect x="64" y="639.8" width="6.5" height="7.5" fill="#f4f4f4" stroke="#111" stroke-width=".6"/>
<rect x="67" y="643" width="6.5" height="7.5" fill="#fff" stroke="#111" stroke-width=".6"/>
<rect x="91.2" y="639.5" width="10.5" height="10.5" rx="1.5" fill="#d8d8d0" stroke="#222" stroke-width=".7"/>
<rect x="92.5" y="641" width="8" height="2" fill="#fff" stroke="#555" stroke-width=".4"/>
<circle cx="99.5" cy="648.2" r="3" fill="#d8142c"/>
<path d="M98.3 647l2.4 2.4M100.7 647l-2.4 2.4" stroke="#fff" stroke-width=".9"/>
</svg>
<div class="t" style="left:25.2px;top:163.6px;font-size:12.6px;color:#f2f2f2">Solution</div>
<div class="t" style="left:25.4px;top:275.2px;font-size:11.6px;color:#f2f2f2">Exercise</div>
<div class="t" style="left:25.4px;top:386px;font-size:11.6px;color:#f2f2f2">Background</div>


<svg width="1248" height="43" viewBox="0 659 1248 43" style="position:absolute;left:0;top:659px">
<rect x="0" y="659" width="1248" height="43" fill="#2b2b2b"/>
<rect x="41" y="663.5" width="91.8" height="33.8" rx="4" fill="#262626" stroke="#1d1d1d" stroke-width="1"/>
<path d="M77.4 664v33M104.6 664v33" stroke="#1f1f1f" stroke-width="1"/>
<path d="M87 680.5h8M114.4 680.5h8M118.4 676.5v8" stroke="#555" stroke-width="1"/>
<path d="M173.7 663v35" stroke="#262626" stroke-width="1"/>
<path d="M283.3 681l2.3 2.2 2.3-2.2" fill="none" stroke="#ddd" stroke-width="1.2"/>
<circle cx="314.3" cy="680.2" r="1.1" fill="#ddd"/>
<path d="M323.9 671.2l-5.6 9.1 5.6 8.5" fill="none" stroke="#cfcfcf" stroke-width="1"/>
<rect x="349" y="671.6" width="11.7" height="15.2" fill="#b4b4b4" stroke="#202020" stroke-width=".5"/>
<path d="M350.5 677c2-1 2-3 4-2s2-2 4-1M350.5 683c2-1 2-3 4-2s2 1 4 0" fill="none" stroke="#223048" stroke-width="1.4"/>
<path d="M386.1 671.2l5.6 9.1-5.6 8.5" fill="none" stroke="#cfcfcf" stroke-width="1"/>
<circle cx="395.4" cy="680.3" r="1.1" fill="#ddd"/>
<rect x="416" y="671.6" width="12" height="15.2" fill="#efefef" stroke="#151515" stroke-width=".5"/>
<path d="M426.7 680.6v8M422.7 684.6h8" stroke="#2e8a10" stroke-width="3.2"/>
<path d="M426.7 681.2v6.8M423.3 684.6h6.8" stroke="#6ad82a" stroke-width="1.6"/>
<path d="M448.3 678.3l4.2 3.8 4.2-3.8" fill="none" stroke="#e8e8e8" stroke-width="1.3"/>
<rect x="477.9" y="671.6" width="11.4" height="15.2" fill="#efefef" stroke="#151515" stroke-width=".5"/>
<path d="M485 681.5l6.2 6.2M491.2 681.5l-6.2 6.2" stroke="#a01818" stroke-width="3.2"/>
<path d="M485.4 681.9l5.4 5.4M490.8 681.9l-5.4 5.4" stroke="#ff5050" stroke-width="1.6"/>
<!-- right -->
<rect x="913.6" y="674" width="8.1" height="13" fill="#f0f0f0" stroke="#111" stroke-width=".5"/>
<rect x="923.8" y="674" width="8.2" height="13" fill="#f0f0f0" stroke="#111" stroke-width=".5"/>
<rect x="947.7" y="672" width="17.1" height="1.8" fill="#aaa"/>
<rect x="948.7" y="674.4" width="15.3" height="12.2" fill="#f4f4f4" stroke="#111" stroke-width=".5"/>
<circle cx="956.4" cy="688.8" r="1" fill="#eee"/>
<g stroke="#111" stroke-width="1"><circle cx="989" cy="679.6" r="5.3" fill="#fafafa"/><circle cx="1022.4" cy="679.6" r="5.3" fill="#fafafa"/><circle cx="1056" cy="679.6" r="5.3" fill="#fafafa"/><circle cx="1183.9" cy="679.4" r="5.3" fill="#fafafa"/></g>
<g stroke="#ccc" stroke-width="1.2"><path d="M992.8 683.4l2.6 2.6M1026.2 683.4l2.6 2.6M1059.8 683.4l2.6 2.6M1187.7 683.2l2.6 2.6"/></g>
<rect x="986.8" y="677.6" width="4.4" height="4" fill="none" stroke="#888" stroke-width="1"/>
<path d="M1019.6 679.6l2 2 3.6-3.8" fill="none" stroke="#20a020" stroke-width="1.6"/>
<path d="M1053 679.6h6" stroke="#e02040" stroke-width="1.6"/>
<path d="M1180.9 679.4h6M1183.9 676.4v6" stroke="#20a020" stroke-width="1.4"/>
<rect x="1083.3" y="685.7" width="74.2" height="3.1" rx="1.5" fill="#505050"/>
<rect x="1083.3" y="685.7" width="20" height="3.1" rx="1.5" fill="#a02aa0"/>
<path d="M1120.5 693v5.8" stroke="#ccc" stroke-width="1"/>
<path d="M1107.6 698c-2-3-7-6-7-11.2a7 7 0 0 1 14 0c0 5.2-5 8.2-7 11.2z" fill="#c2bdb5" stroke="#111" stroke-width=".8"/>
<path d="M1206.8 663v35" stroke="#262626" stroke-width="1"/>
<rect x="1212.3" y="663" width="32.6" height="34.7" rx="4" fill="#1a1a1a"/>
<g fill="none" stroke="#f2601e" stroke-width="2.2"><path d="M1221.5 673l5 5M1235.7 673l-5 5M1221.5 687.2l5-5M1235.7 687.2l-5-5"/></g>
<g fill="#f2601e"><path d="M1220.5 672h5.5l-5.5 5.5z"/><path d="M1236.7 672h-5.5l5.5 5.5z"/><path d="M1220.5 688.2h5.5l-5.5-5.5z"/><path d="M1236.7 688.2h-5.5l5.5-5.5z"/></g>
</svg>
<div class="t" style="left:8.8px;top:675px;font-size:12px;color:#ececec">Page</div>
<div class="t" style="left:48.3px;top:675px;font-size:12px;color:#ececec">1</div>
<div class="t" style="left:141.3px;top:675px;font-size:12px;color:#ececec">of 1</div>
<div class="t" style="left:184px;top:675px;font-size:11.5px;color:#ececec">Layer</div>
<div class="t" style="left:218.3px;top:675px;font-size:12px;font-weight:bold;color:#fff">Solution</div>
<div class="t" style="left:1097.2px;top:665px;font-size:11px;color:#b8b8b8">58%</div>

</body></html>
